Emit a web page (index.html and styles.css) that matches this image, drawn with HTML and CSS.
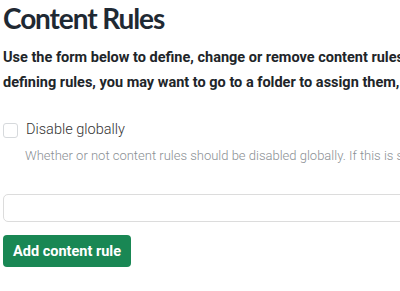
FILE: index.html
```html
<!DOCTYPE html>
<html>
<head>
<meta charset="utf-8">
<link rel="stylesheet" href="styles.css">
</head>
<body>
<main class="page">
  <h1 class="title">Content Rules</h1>
  <p class="lead">Use the form below to define, change or remove content rules. Rules will automatically perform actions on content when certain triggers take place. After defining rules, you may want to go to a folder to assign them, using the "rules" item in the actions menu.</p>
  <div class="field">
    <label class="check">
      <span class="box"></span>
      <span class="check-label">Disable globally</span>
    </label>
    <div class="help">Whether or not content rules should be disabled globally. If this is selected, no rules will be executed anywhere in the portal.</div>
  </div>
  <div class="input"></div>
  <button class="btn">Add content rule</button>
</main>
</body>
</html>
```
FILE: styles.css
```css
html, body { margin: 0; padding: 0; background: #fff; }
body { font-family: Roboto, "Liberation Sans", sans-serif; color: #212529; overflow: hidden; }
.page { width: 1100px; padding: 0 0 0 3px; }
.title { font-family: Lato, Roboto, sans-serif; font-weight: 700; font-size: 28px; line-height: 36px; margin: 0; color: #1f2933; letter-spacing: -1.1px; }
.lead { font-weight: 700; font-size: 14.5px; line-height: 25px; margin: 9px 0 0; width: 1040px; }
.field { margin-top: 24px; }
.check { display: flex; align-items: center; gap: 8px; }
.box { width: 13px; height: 13px; border: 1px solid #d6d9dc; border-radius: 3px; background: #fff; flex: none; }
.check-label { font-size: 14.5px; font-weight: 300; color: #333; line-height: 22px; }
.help { font-size: 13px; font-weight: 300; color: #8a8f94; margin: 5px 0 0 22px; line-height: 20px; white-space: nowrap; }
.input { margin-top: 28px; height: 26px; border: 1px solid #dcdcdc; border-radius: 5px; width: 1000px; }
.btn { display: block; margin-top: 13px; background: #198754; color: #fff; border: 0; border-radius: 4px; font-family: Roboto, sans-serif; font-weight: 700; font-size: 14.5px; padding: 0 10px; height: 32px; }
```
